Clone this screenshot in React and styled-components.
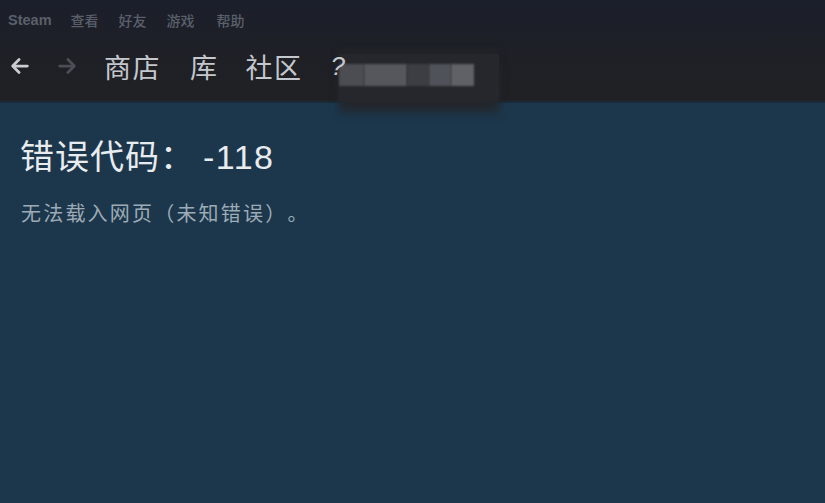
import React from 'react'
import styled, { createGlobalStyle } from 'styled-components'

const Global = createGlobalStyle`
  html, body { margin: 0; padding: 0; }
  body {
    width: 825px;
    height: 503px;
    overflow: hidden;
    background: #1c374c;
    font-family: "Noto Sans CJK SC", "Noto Sans", Arial, sans-serif;
    text-spacing-trim: space-all;
  }
`

const Page = styled.div`
  width: 825px;
  height: 503px;
  display: flex;
  flex-direction: column;
  background: #1c374c;
`

const Header = styled.header`
  height: 101px;
  background: linear-gradient(180deg, #1b1f2b 0%, #1e2027 45%, #202124 100%);
  display: flex;
  flex-direction: column;
  border-bottom: 2px solid #1b2a38;
  position: relative;
  z-index: 1;
`

const MenuBar = styled.div`
  display: flex;
  align-items: center;
  padding: 8px 0 0 8px;
  height: 24px;
`

const MenuItem = styled.span`
  font-size: ${p => p.$latin ? 14.5 : 14}px;
  color: #5a5f6a;
  margin-right: ${p => p.$gap || 20}px;
  font-family: ${p => p.$latin ? '"Liberation Sans", Arial, sans-serif' : '"Noto Sans CJK SC", sans-serif'};
  font-weight: ${p => p.$latin ? 700 : 500};
`

const NavRow = styled.div`
  display: flex;
  align-items: center;
  padding: 12px 0 0 9px;
  height: 44px;
`

const Arrow = styled.span`
  display: inline-flex;
  margin-right: ${p => p.$mr}px;
  color: ${p => p.$dim ? '#4a4e55' : '#c9ccd1'};
`

const NavLink = styled.span`
  font-size: 27px;
  color: #c4c8cd;
  margin-right: ${p => p.$mr}px;
  letter-spacing: 1.5px;
`

const Question = styled.span`
  font-size: 26px;
  color: #c4c8cd;
  font-family: "Liberation Sans", Arial, sans-serif;
  font-style: italic;
  position: relative;
  z-index: 2;
`

const Blurred = styled.div`
  display: flex;
  align-items: center;
  height: 48px;
  margin-left: -6px;
  padding: 0 25px 0 0;
  background: #25272c;
  box-shadow: 0 10px 8px rgba(36, 38, 43, 0.95), 0 -4px 6px rgba(36, 38, 43, 0.6);
  position: relative;
  top: 8px;
  align-self: flex-start;
  margin-top: 2px;
`

const Blocks = styled.div`
  display: flex;
  position: relative;
  top: -3px;
`

const Block = styled.span`
  display: inline-block;
  width: ${p => p.$w}px;
  height: 22px;
  background: ${p => p.$c};
  filter: blur(1px);
`

const Content = styled.main`
  padding: 30px 0 0 20px;
  display: flex;
  flex-direction: column;
`

const Title = styled.h1`
  margin: 0;
  font-size: 34px;
  font-weight: 400;
  color: #e8ecef;
  letter-spacing: 1px;
  line-height: 44px;
`

const Code = styled.span`
  font-family: "Liberation Sans", Arial, sans-serif;
  font-size: 34px;
  letter-spacing: 1.5px;
  margin-left: 8px;
`

const Message = styled.p`
  margin: 21px 0 0 1px;
  font-size: 20px;
  letter-spacing: 2.2px;
  color: #9eabb6;
  line-height: 26px;
`

const ArrowIcon = ({ dir }) => (
  <svg width="22" height="22" viewBox="0 0 24 24" fill="none" stroke="currentColor"
    strokeWidth="3" strokeLinecap="round" strokeLinejoin="round">
    {dir === 'left'
      ? <><path d="M20 12H5" /><path d="M11 5l-7 7 7 7" /></>
      : <><path d="M4 12h15" /><path d="M13 5l7 7-7 7" /></>}
  </svg>
)

export default function App() {
  return (
    <>
      <Global />
      <Page>
        <Header>
          <MenuBar>
            <MenuItem $latin $gap={19}>Steam</MenuItem>
            <MenuItem>查看</MenuItem>
            <MenuItem $gap={20}>好友</MenuItem>
            <MenuItem $gap={22}>游戏</MenuItem>
            <MenuItem>帮助</MenuItem>
          </MenuBar>
          <NavRow>
            <Arrow $mr={25}><ArrowIcon dir="left" /></Arrow>
            <Arrow $dim $mr={26}><ArrowIcon dir="right" /></Arrow>
            <NavLink $mr={29}>商店</NavLink>
            <NavLink $mr={27}>库</NavLink>
            <NavLink $mr={28}>社区</NavLink>
            <Question>?</Question>
            <Blurred>
              <Blocks>
                <Block $w={25} $c="#4b4d53" />
                <Block $w={43} $c="#55575d" />
                <Block $w={22} $c="#3c3e44" />
                <Block $w={22} $c="#505259" />
                <Block $w={23} $c="#5f6167" />
              </Blocks>
            </Blurred>
          </NavRow>
        </Header>
        <Content>
          <Title>错误代码：<Code>-118</Code></Title>
          <Message>无法载入网页（未知错误）。</Message>
        </Content>
      </Page>
    </>
  )
}
